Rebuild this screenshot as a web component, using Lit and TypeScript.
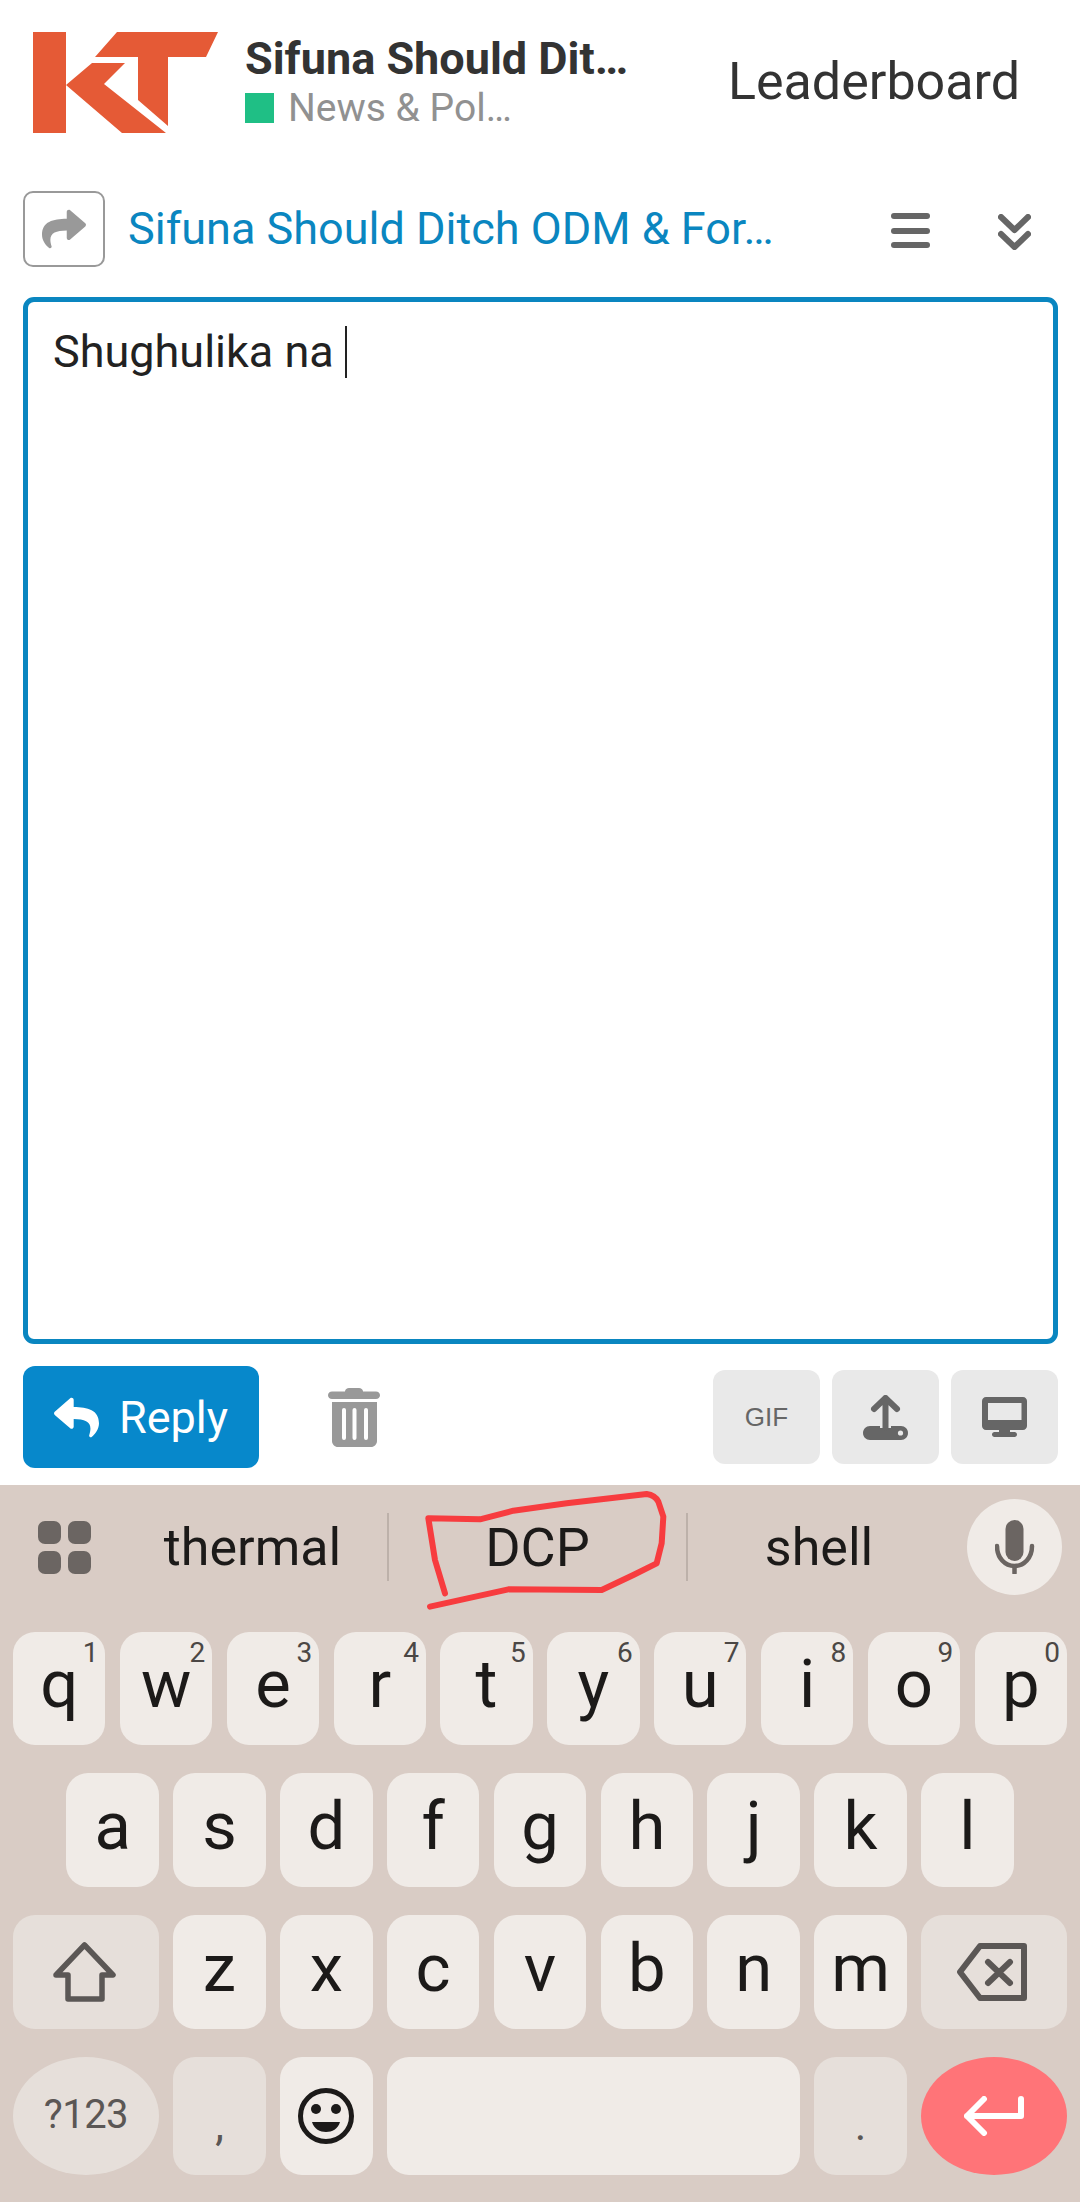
import { LitElement, html, css } from "lit";
import { customElement } from "lit/decorators.js";

const REPLY = "M8.309 189.836L184.313 37.851C199.719 24.546 224 35.347 224 56.015v80.053c160.629 1.839 288 34.032 288 186.258 0 61.441-39.581 122.309-83.333 154.132-13.653 9.931-33.111-2.533-28.077-18.631 45.344-145.012-21.507-183.51-176.59-185.742V360c0 20.7-24.3 31.453-39.687 18.164l-176.004-152c-11.071-9.562-11.086-26.753 0-36.328z";
const SHARE = "M503.691 189.836L327.687 37.851C312.281 24.546 288 35.347 288 56.015v80.053C127.371 137.907 0 170.1 0 322.326c0 61.441 39.581 122.309 83.333 154.132 13.653 9.931 33.111-2.533 28.077-18.631C66.066 312.814 132.917 274.316 288 272.085V360c0 20.7 24.3 31.453 39.687 18.164l176.004-152c11.071-9.562 11.086-26.753 0-36.328z";

const ROW1 = [["q","1"],["w","2"],["e","3"],["r","4"],["t","5"],["y","6"],["u","7"],["i","8"],["o","9"],["p","0"]];

@customElement("app-root")
export class AppRoot extends LitElement {
  static styles = css`
    :host { display: flex; flex-direction: column; width: 1080px; height: 2202px; background: #fff; overflow: hidden; font-family: Roboto, "Liberation Sans", sans-serif; }
    svg { display: block; flex: none; }

    .header { height: 170px; flex: none; display: flex; align-items: flex-start; padding: 32px 60px 0 33px; box-sizing: border-box; }
    .logo { width: 185px; height: 101px; margin-right: 27px; }
    .head-text { display: flex; flex-direction: column; padding-top: 2px; }
    .head-title { font-weight: 700; font-size: 45px; line-height: 50px; color: #333; white-space: nowrap; }
    .head-cat { display: flex; align-items: center; gap: 14px; font-size: 39px; line-height: 44px; color: #919191; white-space: nowrap; margin-top: 2px; }
    .cat-box { width: 29px; height: 30px; background: #1fbf85; }
    .leader { margin-left: auto; font-size: 52px; line-height: 60px; color: #333; padding-top: 20px; white-space: nowrap; }

    .topic { flex: none; height: 106px; display: flex; align-items: flex-start; padding: 21px 0 0 23px; }
    .share { width: 82px; height: 76px; box-sizing: border-box; border: 2px solid #999; border-radius: 10px; display: flex; align-items: center; justify-content: center; }
    .share svg { width: 44px; height: 44px; fill: #999; }
    .topic-title { font-size: 45px; line-height: 76px; color: #0a86c0; margin-left: 23px; width: 650px; white-space: nowrap; }
    .menu { width: 39px; margin-left: 113px; margin-top: 22px; display: flex; flex-direction: column; gap: 8.5px; }
    .menu i { display: block; height: 6px; border-radius: 3px; background: #666; }
    .chev { width: 33px; height: 36px; margin-left: 68px; margin-top: 23px; }

    .editor { flex: none; height: 1047px; margin: 0 22px 0 23px; box-sizing: border-box; border: 5px solid #0a86c0; border-radius: 11px; padding: 24px 0 0 25px; font-size: 45px; line-height: 52px; color: #222; white-space: nowrap; }
    .caret { display: inline-block; width: 2px; height: 52px; background: #222; margin-left: 11px; vertical-align: top; }

    .actions { flex: none; height: 141px; box-sizing: border-box; display: flex; align-items: flex-start; padding: 22px 22px 0 23px; }
    .reply { width: 236px; height: 102px; border-radius: 12px; background: #0788cb; color: #fff; display: flex; align-items: center; font-size: 45px; box-sizing: border-box; padding-left: 31px; gap: 20px; }
    .reply svg { width: 45px; height: 45px; fill: #fff; }
    .trash { width: 52px; height: 59px; margin: 22px 0 0 69px; }
    .tools { margin-left: auto; display: flex; gap: 12px; margin-top: 4px; }
    .tool { width: 107px; height: 94px; border-radius: 12px; background: #e9e9e9; display: flex; align-items: center; justify-content: center; color: #666; font-family: "Liberation Sans", sans-serif; font-size: 26px; }

    .kb { position: relative; flex: none; height: 717px; background: #d9ccc5; display: flex; flex-direction: column; box-sizing: border-box; }
    .sugg { height: 146px; flex: none; box-sizing: border-box; padding: 0 18px 22px 38px; display: flex; align-items: center; font-size: 52px; color: #1c1a19; }
    .apps { width: 53px; height: 53px; margin-right: 27px; }
    .s { display: flex; align-items: center; justify-content: center; height: 68px; box-sizing: border-box; }
    .s1 { width: 271px; border-right: 2px solid #bdb1aa; }
    .s2 { width: 299px; border-right: 2px solid #bdb1aa; font-size: 54px; }
    .s3 { width: 262px; }
    .mic { width: 95px; height: 96px; border-radius: 50%; background: #f0ebe7; margin-left: 17px; display: flex; align-items: center; justify-content: center; }
    .mic svg { width: 40px; height: 54px; }
    .mark { position: absolute; left: 400px; top: -5px; width: 300px; height: 140px; pointer-events: none; }

    .keys { display: grid; grid-template-columns: repeat(20, 1fr); grid-template-rows: 113px 114px 114px 118px; column-gap: 14.4px; row-gap: 28px; padding: 1px 13px 0; }
    .k { position: relative; grid-column: span 2; background: #f0ebe7; border-radius: 22px; display: flex; align-items: center; justify-content: center; padding-bottom: 9px; box-sizing: border-box; font-size: 67px; line-height: 80px; color: #1c1a19; }
    .k sup { position: absolute; right: 7px; top: 7px; font-size: 28px; line-height: 28px; color: #4b4745; }
    .first { grid-column: 2 / span 2; }
    .wide { grid-column: span 3; }
    .fn { background: #e6dfda; }
    .space { grid-column: span 8; }
    .oval { border-radius: 50%; padding-bottom: 0; }
    .k123 { font-size: 40px; color: #5b5755; letter-spacing: -0.5px; padding-bottom: 2px; }
    .punct { font-size: 44px; color: #5b5755; padding-bottom: 0; padding-top: 18px; }
    .enter { background: #ff7478; }
    .plain { padding-bottom: 0; }
    .shift { margin-right: 2px; }
    .bksp { margin-right: 4px; }
  `;

  render() {
    return html`
      <div class="header">
        <svg class="logo" viewBox="33 32 185 101">
          <path fill="#e55a36" d="M33 32H66V133H33Z M117 32H218L206 57H168V126L138 100V57H95Z M66 85L92 63H125L104 84L166 133H122Z" />
        </svg>
        <div class="head-text">
          <div class="head-title">Sifuna Should Dit…</div>
          <div class="head-cat"><span class="cat-box"></span><span>News &amp; Pol…</span></div>
        </div>
        <div class="leader">Leaderboard</div>
      </div>

      <div class="topic">
        <div class="share"><svg viewBox="0 0 512 512"><path d="${SHARE}" /></svg></div>
        <div class="topic-title">Sifuna Should Ditch ODM &amp; For…</div>
        <div class="menu"><i></i><i></i><i></i></div>
        <svg class="chev" viewBox="0 0 33 36" fill="none" stroke="#666" stroke-width="6" stroke-linecap="round" stroke-linejoin="round">
          <path d="M3 3L16.5 16L30 3 M3 20L16.5 33L30 20" />
        </svg>
      </div>

      <div class="editor">Shughulika na<span class="caret"></span></div>

      <div class="actions">
        <div class="reply"><svg viewBox="0 0 512 512"><path d="${REPLY}" /></svg><span>Reply</span></div>
        <svg class="trash" viewBox="0 0 52 59">
          <path fill="#999" d="M17 3.5C17 1.5 19 0 21 0H31C33 0 35 1.5 35 3.5H48C50.2 3.5 52 5.2 52 7.2S50.2 11 48 11H4C1.8 11 0 9.2 0 7.2S1.8 3.5 4 3.5Z" />
          <path fill="#999" fill-rule="evenodd" d="M4 14H49V53C49 56.3 46.3 59 43 59H10C6.7 59 4 56.3 4 53Z M14 22V50a2 2 0 0 0 4 0V22a2 2 0 0 0-4 0Z M24.5 22V50a2 2 0 0 0 4 0V22a2 2 0 0 0-4 0Z M36 22V50a2 2 0 0 0 4 0V22a2 2 0 0 0-4 0Z" />
        </svg>
        <div class="tools">
          <div class="tool">GIF</div>
          <div class="tool">
            <svg width="45" height="45" viewBox="0 0 45 45">
              <path fill="#666" d="M7 31H38C41.9 31 45 34.1 45 38S41.9 45 38 45H7C3.1 45 0 41.9 0 38S3.1 31 7 31Z" />
              <path fill="none" stroke="#e9e9e9" stroke-width="11" d="M22.5 20V33" />
              <path fill="none" stroke="#666" stroke-width="6" stroke-linecap="round" stroke-linejoin="round" d="M22.5 33V3 M11 14L22.5 3L34 14" />
              <circle cx="37.5" cy="38" r="2.6" fill="#e9e9e9" />
            </svg>
          </div>
          <div class="tool">
            <svg width="45" height="40" viewBox="0 0 45 40">
              <path fill="#666" fill-rule="evenodd" d="M4 0H41C43.2 0 45 1.8 45 4V29C45 31.2 43.2 33 41 33H28V35H32.5C33.9 35 35 36.1 35 37.5S33.9 40 32.5 40H12.5C11.1 40 10 38.9 10 37.5S11.1 35 12.5 35H17V33H4C1.8 33 0 31.2 0 29V4C0 1.8 1.8 0 4 0Z M6 6V23H39.5V6Z" />
            </svg>
          </div>
        </div>
      </div>

      <div class="kb">
        <div class="sugg">
          <svg class="apps" viewBox="0 0 53 53" fill="#6b6562">
            <rect x="0" y="0" width="23" height="23" rx="7" /><rect x="30" y="0" width="23" height="23" rx="7" />
            <rect x="0" y="30" width="23" height="23" rx="7" /><rect x="30" y="30" width="23" height="23" rx="7" />
          </svg>
          <div class="s s1">thermal</div>
          <div class="s s2">DCP</div>
          <div class="s s3">shell</div>
          <div class="mic">
            <svg viewBox="0 0 40 54">
              <rect x="10.5" y="0" width="18" height="41" rx="9" fill="#6b6562" />
              <path d="M2 26C2 38 10 46 19.5 46S37 38 37 26 M19.5 46V53" fill="none" stroke="#6b6562" stroke-width="4.5" stroke-linecap="round" />
            </svg>
          </div>
        </div>
        <svg class="mark" viewBox="0 0 900 420" fill="none" stroke="#f73c3f" stroke-width="18" stroke-linecap="round" stroke-linejoin="round">
          <path d="M135 340L105 240L85 115L240 118L340 92L500 70L740 42Q765 45 775 65L790 110L785 190L770 250L700 285L605 330L325 328L90 380" />
        </svg>
        <div class="keys">
          ${ROW1.map(([l, n]) => html`<div class="k">${l}<sup>${n}</sup></div>`)}
          ${"asdfghjkl".split("").map((l, i) => html`<div class="k ${i === 0 ? "first" : ""}">${l}</div>`)}
          <div class="k wide fn plain">
            <svg class="shift" width="63" height="60" viewBox="0 0 63 60" fill="none" stroke="#5b5755" stroke-width="5.5" stroke-linejoin="round">
              <path d="M31.5 3L60 33H49V57H15V33H3Z" />
            </svg>
          </div>
          ${"zxcvbnm".split("").map((l) => html`<div class="k">${l}</div>`)}
          <div class="k wide fn plain">
            <svg class="bksp" width="70" height="58" viewBox="0 0 70 58" fill="none" stroke="#5b5755" stroke-width="6" stroke-linecap="round" stroke-linejoin="round">
              <path d="M3 29L23 3H67V55H23Z M31 19L53 40 M53 19L31 40" />
            </svg>
          </div>
          <div class="k wide fn oval k123">?123</div>
          <div class="k fn punct">,</div>
          <div class="k plain">
            <svg width="56" height="56" viewBox="0 0 56 56">
              <circle cx="28" cy="28" r="25.5" fill="none" stroke="#1c1a19" stroke-width="5" />
              <circle cx="18" cy="21" r="5" fill="#1c1a19" /><circle cx="38" cy="21" r="5" fill="#1c1a19" />
              <path d="M14 34H42C40 41 34 44 28 44S16 41 14 34Z" fill="#1c1a19" />
            </svg>
          </div>
          <div class="k space"></div>
          <div class="k fn punct">.</div>
          <div class="k wide oval enter">
            <svg width="60" height="40" viewBox="0 0 60 40" fill="none" stroke="#fff" stroke-width="6" stroke-linecap="round" stroke-linejoin="round">
              <path d="M57 3V20H3 M20 3L3 20L20 37" />
            </svg>
          </div>
        </div>
      </div>
    `;
  }
}
